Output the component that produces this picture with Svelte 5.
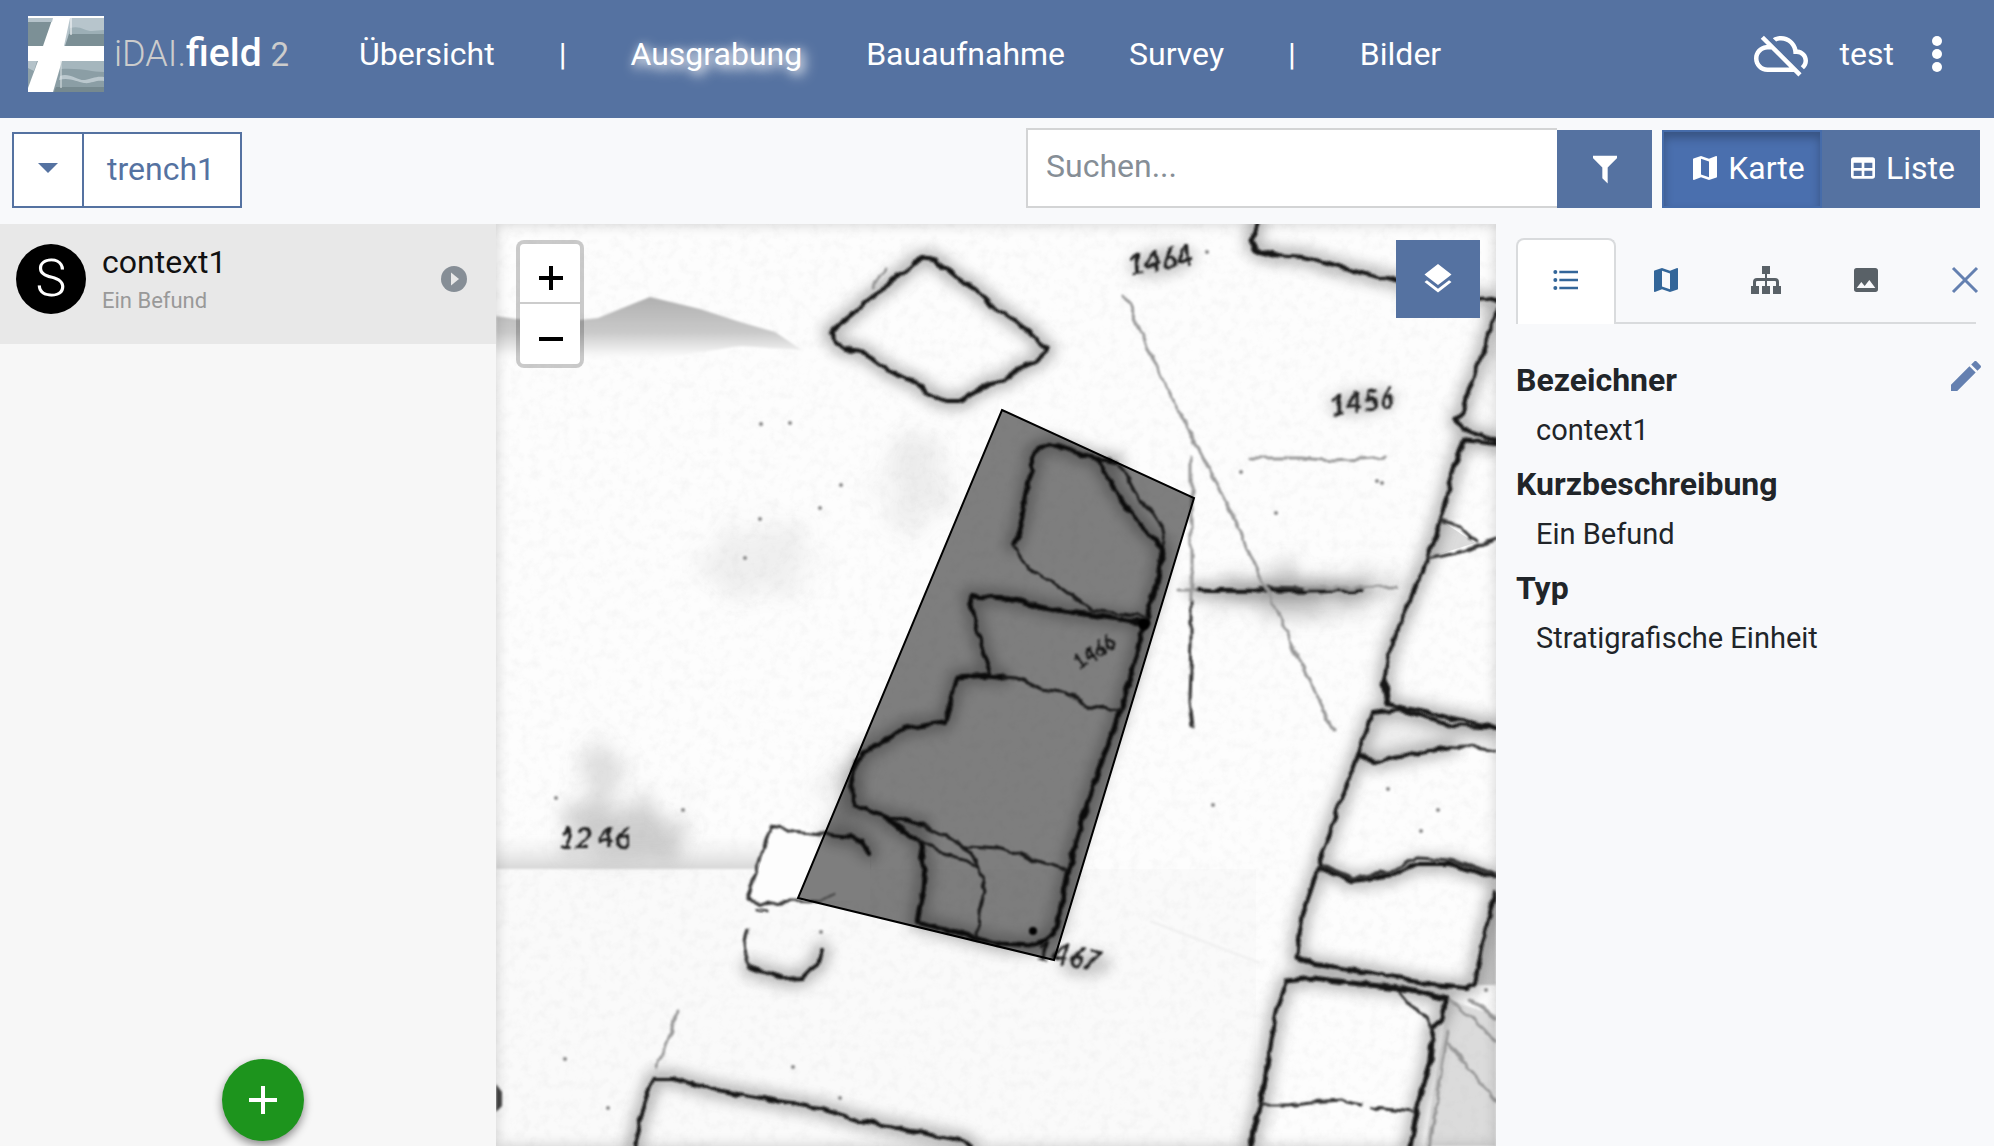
<script lang="ts">
  const icons = {
    cloudOff:
      'M24 15c0-2.64-2.05-4.78-4.65-4.96C18.67 6.59 15.64 4 12 4c-1.33 0-2.57.36-3.65.97l1.49 1.49C10.51 6.17 11.23 6 12 6c3.04 0 5.5 2.46 5.5 5.5v.5H19c1.66 0 3 1.34 3 3 0 .99-.48 1.85-1.21 2.4l1.41 1.41c1.09-.92 1.8-2.27 1.8-3.81zM4.41 3.86L3 5.27l2.77 2.77h-.42C2.34 8.36 0 10.91 0 14c0 3.31 2.69 6 6 6h11.73l2 2 1.41-1.41L4.41 3.86zM6 18c-2.21 0-4-1.79-4-4s1.79-4 4-4h1.73l8 8H6z',
    filter: 'M3 2H21V4H20.92L14 10.92V22.91L10 18.91V10.91L3.09 4H3V2Z',
    map: 'M20.5 3l-.16.03L15 5.1 9 3 3.36 4.9c-.21.07-.36.25-.36.48V20.5c0 .28.22.5.5.5l.16-.03L9 18.9l6 2.1 5.64-1.9c.21-.07.36-.25.36-.48V3.5c0-.28-.22-.5-.5-.5zM15 19l-6-2.11V5l6 2.11V19z',
    table:
      'M5,4H19A2,2 0 0,1 21,6V18A2,2 0 0,1 19,20H5A2,2 0 0,1 3,18V6A2,2 0 0,1 5,4M5,8V12H11V8H5M13,8V12H19V8H13M5,14V18H11V14H5M13,14V18H19V14H13Z',
    layers:
      'M12,16L19.36,10.27L21,9L12,2L3,9L4.63,10.27M12,18.54L4.62,12.81L3,14.07L12,21.07L21,14.07L19.37,12.8L12,18.54Z',
    list: 'M7,5H21V7H7V5M7,13V11H21V13H7M4,4.5A1.5,1.5 0 0,1 5.5,6A1.5,1.5 0 0,1 4,7.5A1.5,1.5 0 0,1 2.5,6A1.5,1.5 0 0,1 4,4.5M4,10.5A1.5,1.5 0 0,1 5.5,12A1.5,1.5 0 0,1 4,13.5A1.5,1.5 0 0,1 2.5,12A1.5,1.5 0 0,1 4,10.5M7,19V17H21V19H7M4,16.5A1.5,1.5 0 0,1 5.5,18A1.5,1.5 0 0,1 4,19.5A1.5,1.5 0 0,1 2.5,18A1.5,1.5 0 0,1 4,16.5Z',
    image:
      'M8.5,13.5L11,16.5L14.5,12L19,18H5M21,19V5C21,3.89 20.1,3 19,3H5A2,2 0 0,0 3,5V19A2,2 0 0,0 5,21H19A2,2 0 0,0 21,19Z',
    pencil:
      'M20.71,7.04C21.1,6.65 21.1,6 20.71,5.63L18.37,3.29C18,2.9 17.35,2.9 16.96,3.29L15.12,5.12L18.87,8.87M3,17.25V21H6.75L17.81,9.93L14.06,6.18L3,17.25Z',
  };

  // Stone outlines of the excavation drawing: heavy, medium, fine and faint pencil strokes
  const heavy = [
    '915,262 925,258 935,260 955,277',
    '1257,224 1252,240 1257,251 1273,255',
    '970,596 1007,598 1057,610 1147,623',
    '1163,548 1157,583 1147,617 1143,629 1130,679 1117,721 1097,774 1073,851 1068,874 1057,927 1046,940 1030,946 1000,944 960,933 917,922',
    '1463,440 1455,464',
    '1287,981 1313,978 1360,984 1400,988 1447,999',
    '1296,957 1313,964 1370,973',
    '1384,681 1388,704',
    '1250,1146 1262,1100 1268,1060',
    '1447,999 1440,1020 1433,1030 1430,1060 1418,1107 1410,1146',
    '917,922 923,889 925,870 920,839',
    '957,677 990,675 1003,677',
    '884,817 905,832 920,839',
    '1257,591 1305,591',
  ];
  const medium = [
    '830,332 850,316 870,298 884,288 900,275 915,262 925,258 935,260 955,277 975,289 990,303 1010,318 1032,333 1040,344 1048,350 1035,362 1016,370 1006,380 990,383 975,392 962,401 945,401 930,394 915,382 900,377 880,365 862,351 845,349 835,341 830,332',
    '1273,255 1303,257 1333,266 1396,281 1480,298 1496,301',
    '1496,309 1488,337 1480,363 1468,392 1463,413 1456,419 1462,429 1496,440',
    '1496,444 1463,440 1455,464 1447,495 1437,530 1427,559 1415,587 1408,606 1393,640 1387,664 1384,681 1388,704 1420,711 1457,719 1496,726',
    '1373,713 1400,710 1453,725 1496,728',
    '1373,713 1358,755 1333,823 1310,893 1303,913 1296,957',
    '1370,973 1433,985 1467,988 1474,983 1482,943 1495,893',
    '1358,755 1377,762 1400,757 1430,750 1450,747',
    '1322,868 1353,881 1393,875 1417,864 1450,864 1496,878',
    '1287,981 1277,1010 1268,1060 1262,1100',
    '634,1146 640,1120 654,1078 672,1078 711,1089 767,1099 818,1108 858,1120 917,1132 965,1141 970,1146',
    '1013,545 1019,530 1023,514 1028,483 1033,470 1033,453 1050,444 1093,458 1117,462',
    '1098,460 1117,493 1140,525 1163,548',
    '970,596 980,640 990,673',
    '957,677 952,698 945,722 903,729 880,744 862,753 852,774 853,805 883,816 923,826',
    '870,853 862,843 850,837 830,835',
    '749,967 760,971 775,975 788,979 802,978 812,968 818,965 822,950',
    '1195,590 1210,591 1363,590',
  ];
  const fine = [
    '1400,992 1413,1007 1427,1017 1433,1030',
    '1013,545 1027,568 1057,585 1090,610 1147,617',
    '1120,464 1140,502 1160,522 1165,545',
    '1003,677 1017,678 1040,689 1063,692 1090,707 1120,710',
    '923,826 967,847 1000,849 1067,870',
    '920,839 940,853 966,860 980,868 985,893 978,912 977,935',
    '963,845 972,855 980,868',
    '830,835 800,832 771,827 763,850 758,866 747,900 763,904 790,901 818,902',
    '758,910 766,911',
    '748,930 744,945 746,955 749,967',
    '1322,865 1353,878 1393,871 1417,858 1450,860 1496,874',
    '1440,520 1460,526 1477,542',
    '1427,559 1453,554 1496,540',
    '1262,1105 1288,1105 1310,1102 1343,1100 1360,1104',
    '1373,1108 1413,1112',
    '1450,747 1470,746 1496,750',
    '1191,600 1191,645 1189,700 1192,726',
    '1305,588 1260,587',
  ];
  const faint = [
    '1125,296 1140,330 1163,380 1200,451 1232,515 1263,582 1290,640 1333,730',
    '1191,458 1191,600',
    '1250,458 1300,458 1335,461 1385,457',
    '1180,590 1195,590',
    '1305,588 1395,587',
    '676,1012 670,1036 656,1068',
    '1448,1043 1496,1102',
    '1448,1030 1438,1093 1430,1146',
    '1450,1000 1496,1040',
    '1470,1000 1496,1018',
    '818,902 834,893',
    '873,287 886,270',
  ];
  const specks = [
    [761, 424], [790, 423], [760, 519], [1241, 472], [1276, 513], [1377, 481], [565, 1059],
    [608, 1108], [793, 1067], [840, 1098], [1213, 805], [1388, 789], [1438, 810], [1421, 831],
    [683, 810], [556, 798], [821, 932], [761, 910], [1207, 252], [1486, 990], [841, 485],
    [820, 508], [745, 558], [1382, 483],
  ];

  const facts = [
    { label: 'Bezeichner', value: 'context1' },
    { label: 'Kurzbeschreibung', value: 'Ein Befund' },
    { label: 'Typ', value: 'Stratigrafische Einheit' },
  ];

  let search = $state('');
</script>

{#snippet icon(path: string)}
  <svg class="icon" viewBox="0 0 24 24" aria-hidden="true"><path d={path} /></svg>
{/snippet}

<div class="app">
  <header>
    <a class="brand" href="#home">
      <svg class="logo" viewBox="0 0 76 76" aria-hidden="true">
        <rect width="76" height="76" fill="#fff" />
        <path d="M0 6L24 4L15 30H0Z" fill="#7c9096" />
        <path d="M0 2H25L24 6H0Z" fill="#b5c3ca" />
        <path d="M42 2H76V30H36Z" fill="#b7c5cc" />
        <path d="M42 12c10-3 15 3 22 3l12-1v8H40Z" fill="#9cafb6" />
        <path d="M41 18H76V30H37Z" fill="#7b8f95" />
        <path d="M43 2V19" stroke="#fff" />
        <path d="M0 45H10L0 72Z" fill="#8da0a7" />
        <path d="M0 45H9L6 55 0 52Z" fill="#b4c2c9" />
        <path d="M34 45H76V76H25Z" fill="#8b9ea5" />
        <path d="M34 45H76V56c-14 0-20-4-43-3Z" fill="#a5b6bd" />
        <path d="M32 60c9-4 18 5 25 4s10-4 19-3v4c-9-1-13 3-20 2s-15-6-25-3Z" fill="#bac7cd" />
        <path d="M28 71H76V76H26Z" fill="#76898f" />
        <path d="M33 45V72" stroke="#dfe6e8" />
      </svg>
      <span class="name">iDAI.<b>field</b> <small>2</small></span>
    </a>
    <nav aria-label="Hauptnavigation">
      <a href="#overview">Übersicht</a>
      <span>|</span>
      <a class="current" href="#excavation" aria-current="page">Ausgrabung</a>
      <a href="#building">Bauaufnahme</a>
      <a href="#survey">Survey</a>
      <span>|</span>
      <a href="#images">Bilder</a>
    </nav>
    <div class="account">
      <span class="cloud">{@render icon(icons.cloudOff)}</span>
      <span>test</span>
      <button class="more" aria-label="Menü">
        <svg viewBox="0 0 12 38" aria-hidden="true">
          <circle cx="6" cy="6" r="5" /><circle cx="6" cy="19" r="5" /><circle cx="6" cy="32" r="5" />
        </svg>
      </button>
    </div>
  </header>

  <div class="toolbar">
    <div class="operation">
      <button class="caret" aria-label="Auswahl öffnen">
        <svg viewBox="0 0 20 10" aria-hidden="true"><path d="M0 0H20L10 10Z" /></svg>
      </button>
      <button>trench1</button>
    </div>
    <div class="search">
      <input type="text" placeholder="Suchen..." aria-label="Suchen" bind:value={search} />
      <button class="filter" aria-label="Filter">{@render icon(icons.filter)}</button>
    </div>
    <div class="views">
      <button class="on" aria-pressed="true">{@render icon(icons.map)}Karte</button>
      <button aria-pressed="false">{@render icon(icons.table)}Liste</button>
    </div>
  </div>

  <main>
    <aside>
      <div class="item">
        <span class="badge">S</span>
        <div class="texts">
          <strong>context1</strong>
          <span>Ein Befund</span>
        </div>
        <button class="go" aria-label="Öffnen">
          <svg viewBox="0 0 28 28" aria-hidden="true">
            <circle cx="14" cy="14" r="13" fill="#868e96" />
            <path d="M11 7.500L19 14L11 20.500Z" fill="#e8e8e8" />
          </svg>
        </button>
      </div>
      <button class="add" aria-label="Neue Ressource">
        <svg viewBox="0 0 28 28" aria-hidden="true"><path d="M12 0h4v12h12v4H16v12h-4V16H0v-4h12Z" /></svg>
      </button>
    </aside>

    <section class="map" aria-label="Karte">
      <svg class="drawing" viewBox="496 224 1000 922" preserveAspectRatio="xMinYMin slice">
        <defs>
          <filter id="rough" x="-5%" y="-5%" width="110%" height="110%">
            <feTurbulence type="fractalNoise" baseFrequency="0.07" numOctaves="2" seed="4" />
            <feDisplacementMap in="SourceGraphic" scale="7" xChannelSelector="R" yChannelSelector="G" />
            <feGaussianBlur stdDeviation="1.1" />
          </filter>
          <filter id="halo" x="-10%" y="-10%" width="120%" height="120%">
            <feGaussianBlur stdDeviation="7" />
          </filter>
          <filter id="smudge" x="-40%" y="-40%" width="180%" height="180%">
            <feTurbulence type="fractalNoise" baseFrequency="0.05" numOctaves="4" seed="9" />
            <feDisplacementMap in="SourceGraphic" scale="70" xChannelSelector="R" yChannelSelector="G" />
            <feGaussianBlur stdDeviation="9" />
          </filter>
          <filter id="ink"><feGaussianBlur stdDeviation="1" /></filter>
          <linearGradient id="hill" x1="0" y1="0" x2="0" y2="1">
            <stop offset="0" stop-color="#b0b0b0" />
            <stop offset="0.55" stop-color="#cacaca" />
            <stop offset="0.8" stop-color="#ebebeb" />
            <stop offset="1" stop-color="#fdfdfd" stop-opacity="0" />
          </linearGradient>
          <linearGradient id="strip" x1="0" y1="0" x2="0" y2="1">
            <stop offset="0" stop-color="#eee" stop-opacity="0" />
            <stop offset="1" stop-color="#d6d6d6" />
          </linearGradient>
          <filter id="grain" x="0" y="0" width="100%" height="100%">
            <feTurbulence type="fractalNoise" baseFrequency="0.1" numOctaves="3" seed="2" />
            <feColorMatrix values="0 0 0 0 0.4  0 0 0 0 0.4  0 0 0 0 0.4  0.5 0 0 0 -0.22" />
          </filter>
        </defs>

        <rect x="496" y="224" width="1000" height="922" fill="#fdfdfd" />
        <rect x="496" y="869" width="760" height="277" fill="#fafafa" />
        <rect x="496" y="224" width="1000" height="922" filter="url(#grain)" opacity="0.35" />

        <path
          d="M496 316L516 319L580 320L598 318L620 309L650 297L700 309L740 322L775 332L802 350L740 346L640 362H496Z"
          fill="url(#hill)"
          filter="url(#ink)"
        />
        <path d="M496 835H870V869H496Z" fill="url(#strip)" filter="url(#ink)" />
        <path d="M771 829L870 840V900L749 902Z" fill="#fdfdfd" />
        <g filter="url(#smudge)" fill="#888">
          <ellipse cx="625" cy="832" rx="62" ry="30" opacity="0.4" />
          <ellipse cx="600" cy="775" rx="18" ry="34" opacity="0.26" />
          <ellipse cx="915" cy="480" rx="30" ry="50" opacity="0.14" />
          <ellipse cx="760" cy="560" rx="60" ry="34" opacity="0.12" />
          <ellipse cx="1300" cy="592" rx="90" ry="18" opacity="0.45" />
          <ellipse cx="845" cy="800" rx="14" ry="46" opacity="0.3" />
        </g>
        <path d="M1448 1000L1496 1015V1146H1425Z" fill="#aaa" opacity="0.4" filter="url(#ink)" />
        <path d="M1484 940L1496 900V985L1476 985Z" fill="#999" opacity="0.5" filter="url(#ink)" />
        <path d="M1376 713L1496 730V750L1450 748L1375 760L1360 754Z" fill="#ccc" opacity="0.3" filter="url(#ink)" />
        <path d="M1440 520L1475 543L1427 558Z" fill="#bbb" opacity="0.5" />

        <g class="strokes glow" filter="url(#halo)">
          {#each [...heavy, ...medium] as points}<polyline {points} />{/each}
        </g>
        <g class="strokes" filter="url(#rough)">
          <g class="heavy">{#each heavy as points}<polyline {points} />{/each}</g>
          <g class="medium">{#each medium as points}<polyline {points} />{/each}</g>
          <g class="fine">{#each fine as points}<polyline {points} />{/each}</g>
          <g class="faint">{#each faint as points}<polyline {points} />{/each}</g>
        </g>
        <g filter="url(#ink)">
          {#each specks as [cx, cy]}<circle {cx} {cy} r="2" fill="#888" />{/each}
          <circle cx="1033" cy="931" r="4" />
          <circle cx="1144" cy="624" r="6" />
          <path d="M496 1084l6 8v14l-6 6Z" fill="#444" />
          <path d="M1150 921L1260 963" stroke="#eee" stroke-width="2" />
        </g>
        {#snippet numbers()}
          <text x="1130" y="276" transform="rotate(-10 1130 276)">1464</text>
          <text x="1330" y="416" transform="rotate(-7 1330 416)">1456</text>
          <text x="558" y="848">12 46</text>
          <text class="small" x="1078" y="671" transform="rotate(-32 1078 671)">1466</text>
          <text x="1034" y="960" transform="rotate(10 1034 960)">1467</text>
        {/snippet}
        <g class="numbers shade" filter="url(#halo)" aria-hidden="true">
          <ellipse cx="1162" cy="262" rx="34" ry="14" transform="rotate(-10 1162 262)" />
          <ellipse cx="1362" cy="402" rx="34" ry="12" transform="rotate(-7 1362 402)" />
          <ellipse cx="1085" cy="964" rx="26" ry="12" />
        </g>
        <g class="numbers" filter="url(#rough)">{@render numbers()}</g>

        <polygon class="feature" points="1002,410 1194,498 1054,960 798,898" />
      </svg>

      <div class="zoom">
        <button aria-label="Vergrößern">
          <svg viewBox="0 0 24 24" aria-hidden="true"><path d="M10 0h4v10h10v4H14v10h-4V14H0v-4h10Z" /></svg>
        </button>
        <button aria-label="Verkleinern">
          <svg viewBox="0 0 24 24" aria-hidden="true"><path d="M0 10h24v4H0Z" /></svg>
        </button>
      </div>
      <button class="layers" aria-label="Ebenen">{@render icon(icons.layers)}</button>
    </section>

    <section class="details" aria-label="Details">
      <div class="tabs">
        <button class="tab open" aria-label="Eigenschaften">{@render icon(icons.list)}</button>
        <button class="tab" aria-label="Geometrie">{@render icon(icons.map)}</button>
        <button class="tab grey" aria-label="Relationen">
          <svg class="icon" viewBox="0 0 32 32" aria-hidden="true">
            <path
              d="M12 2h8v8h-3v4h8q4 0 4 4v4h2v8h-8v-8h3v-4q0-1-1-1h-8v5h3v8h-8v-8h3v-5H7q-1 0-1 1v4h3v8H1v-8h2v-4q0-4 4-4h8v-4h-3Z"
            />
          </svg>
        </button>
        <button class="tab grey" aria-label="Bilder">{@render icon(icons.image)}</button>
        <button class="close" aria-label="Schließen">
          <svg viewBox="0 0 28 28" aria-hidden="true"><path d="M2 2L26 26M26 2L2 26" /></svg>
        </button>
      </div>
      <div class="body">
        <dl>
          {#each facts as fact}
            <dt>{fact.label}</dt>
            <dd>{fact.value}</dd>
          {/each}
        </dl>
        <button class="edit" aria-label="Bearbeiten">{@render icon(icons.pencil)}</button>
      </div>
    </section>
  </main>
</div>

<style>
  :global(body) {
    margin: 0;
  }
  .app {
    display: flex;
    flex-direction: column;
    min-height: 100vh;
    background: #f8f9fb;
    color: #212529;
    font: 32px/48px Roboto, 'Liberation Sans', sans-serif;
  }
  .app :global(*) {
    box-sizing: border-box;
  }
  button,
  input {
    margin: 0;
    padding: 0;
    border: 0;
    border-radius: 0;
    background: none;
    color: inherit;
    font: inherit;
  }
  button {
    display: flex;
    align-items: center;
    justify-content: center;
    cursor: pointer;
  }
  svg {
    display: block;
    flex: none;
  }
  .icon {
    width: 32px;
    height: 32px;
    fill: currentColor;
  }

  header {
    display: flex;
    align-items: center;
    padding: 16px 51px 26px 28px;
    background: #5572a1;
    color: #fff;
  }
  header a {
    color: inherit;
    text-decoration: none;
  }
  .brand {
    display: flex;
    align-items: center;
  }
  .logo {
    width: 76px;
    height: 76px;
    margin-right: 10px;
  }
  .name {
    color: #ccc;
    font-size: 36px;
    font-weight: 300;
    white-space: nowrap;
  }
  .name b {
    color: #fff;
    font-size: 39px;
    font-weight: 500;
  }
  .name small {
    font-size: 33px;
    font-weight: 400;
  }
  nav {
    display: flex;
    margin-left: 38px;
  }
  nav > * {
    padding: 0 32px;
  }
  .current {
    text-shadow:
      4px 4px 14px #fff,
      2px 2px 10px rgba(255, 255, 255, 0.6);
  }
  .account {
    display: flex;
    align-items: center;
    margin-left: auto;
  }
  .cloud {
    margin-right: 32px;
  }
  .cloud :global(.icon) {
    width: 54px;
    height: 54px;
  }
  .more {
    margin-left: 37px;
  }
  .more svg {
    width: 12px;
    height: 38px;
    fill: #fff;
  }

  .toolbar {
    display: flex;
    align-items: flex-end;
    height: 106px;
    padding: 0 14px 16px 12px;
  }
  .operation {
    display: flex;
    height: 76px;
    margin-right: auto;
    border: 2px solid #5572a1;
    background: #fff;
    color: #5572a1;
  }
  .operation button {
    padding: 0 25px 2px 23px;
  }
  .operation .caret {
    padding: 0 24px 4px;
    border-right: 2px solid #5572a1;
  }
  .caret svg {
    width: 20px;
    height: 10px;
    fill: #5572a1;
  }
  .search {
    display: flex;
    width: 626px;
    height: 80px;
    margin-right: 10px;
  }
  .search input {
    flex: 1;
    min-width: 0;
    padding: 0 18px 4px;
    border: 2px solid #d3d4d5;
    border-right: 0;
    background: #fff;
  }
  .search input::placeholder {
    color: #868e96;
    opacity: 1;
  }
  .filter {
    width: 95px;
    margin-top: 2px;
    background: #5572a1;
    color: #fff;
  }
  .views {
    display: flex;
    height: 78px;
    background: #5572a1;
    color: #fff;
  }
  .views button {
    gap: 7px;
    width: 158px;
    padding-bottom: 2px;
  }
  .views .on {
    width: 160px;
    padding-left: 10px;
    border: 2px solid #466caa;
    background: #4a6fae;
    box-shadow: inset 0 6px 10px rgba(0, 0, 0, 0.25);
  }

  main {
    display: grid;
    flex: 1;
    grid-template-columns: 496fr 1000fr 498fr;
  }
  aside {
    display: flex;
    flex-direction: column;
    justify-content: space-between;
    background: #f7f7f7;
  }
  .item {
    display: flex;
    align-items: center;
    height: 120px;
    padding: 0 28px 10px 16px;
    background: #e8e8e8;
    color: #111;
  }
  .badge {
    width: 70px;
    height: 70px;
    margin-right: 16px;
    border-radius: 50%;
    background: #000;
    color: #fff;
    font-size: 52px;
    font-weight: 300;
    line-height: 70px;
    text-align: center;
  }
  .texts {
    display: flex;
    flex: 1;
    flex-direction: column;
  }
  .texts strong {
    font-weight: 400;
    line-height: 44px;
  }
  .texts span {
    color: #999;
    font-size: 22px;
    line-height: 34px;
  }
  .go svg {
    width: 28px;
    height: 28px;
  }
  .add {
    align-self: center;
    width: 82px;
    height: 82px;
    margin: 0 0 5px 30px;
    border-radius: 50%;
    background: #1d941d;
    box-shadow: 0 4px 10px rgba(0, 0, 0, 0.45);
  }
  .add svg {
    width: 28px;
    height: 28px;
    fill: #fff;
  }

  .map {
    position: relative;
    display: flex;
    align-items: flex-start;
    justify-content: space-between;
    padding: 16px 16px 16px 20px;
    overflow: hidden;
    background: #fdfdfd;
  }
  .map::after {
    position: absolute;
    inset: 0;
    box-shadow: inset 0 0 14px rgba(0, 0, 0, 0.18);
    content: '';
    pointer-events: none;
  }
  .drawing {
    position: absolute;
    inset: 0;
    width: 100%;
    height: 100%;
  }
  .strokes {
    fill: none;
    stroke: #151515;
    stroke-linecap: round;
    stroke-linejoin: round;
  }
  .glow {
    stroke: #555;
    stroke-width: 16px;
    opacity: 0.42;
  }
  .heavy {
    stroke-width: 5px;
  }
  .medium {
    stroke-width: 4px;
  }
  .fine {
    stroke: #333;
    stroke-width: 3px;
  }
  .faint {
    stroke: #999;
    stroke-width: 3px;
  }
  .numbers {
    fill: #1a1a1a;
    font: italic 700 29px Lato, sans-serif;
  }
  .numbers .small {
    font-size: 21px;
  }
  .shade {
    fill: #888;
    opacity: 0.45;
  }
  .feature {
    fill: rgba(0, 0, 0, 0.5);
    stroke: #000;
    stroke-width: 2px;
  }
  .zoom {
    position: relative;
    z-index: 1;
    border: 4px solid rgba(0, 0, 0, 0.2);
    border-radius: 8px;
    background: #fff;
    background-clip: padding-box;
  }
  .zoom button {
    width: 60px;
    height: 58px;
    padding: 10px 0 0 2px;
  }
  .zoom button + button {
    height: 62px;
    border-top: 2px solid #ccc;
  }
  .zoom svg {
    width: 24px;
    height: 24px;
  }
  .layers {
    position: relative;
    z-index: 1;
    width: 84px;
    height: 78px;
    background: #5572a1;
    color: #fff;
  }
  .layers :global(.icon) {
    width: 36px;
    height: 36px;
  }

  .details {
    padding: 14px 12px 0 20px;
  }
  .tabs {
    display: flex;
    align-items: center;
    height: 86px;
    margin-right: 6px;
    border-bottom: 2px solid #d9dbdd;
  }
  .tab {
    width: 100px;
    height: 84px;
    color: #336699;
  }
  .grey {
    color: #596167;
  }
  .open {
    height: 86px;
    margin-bottom: -2px;
    padding-bottom: 4px;
    border: 2px solid #d9dbdd;
    border-bottom: 0;
    border-radius: 8px 8px 0 0;
    background: #fff;
  }
  .close {
    margin: 0 -3px 0 auto;
  }
  .close svg {
    width: 28px;
    height: 28px;
    fill: none;
    stroke: #6480b0;
    stroke-width: 3px;
  }
  .body {
    display: flex;
    align-items: flex-start;
    justify-content: space-between;
    padding-top: 32px;
  }
  dl {
    margin: 0;
  }
  dt {
    font-weight: 700;
  }
  dd {
    margin: 4px 0 8px 20px;
    font-size: 29px;
    line-height: 44px;
  }
  .edit {
    margin-right: -4px;
    color: #6480b0;
  }
  .edit :global(.icon) {
    width: 40px;
    height: 40px;
  }
</style>
